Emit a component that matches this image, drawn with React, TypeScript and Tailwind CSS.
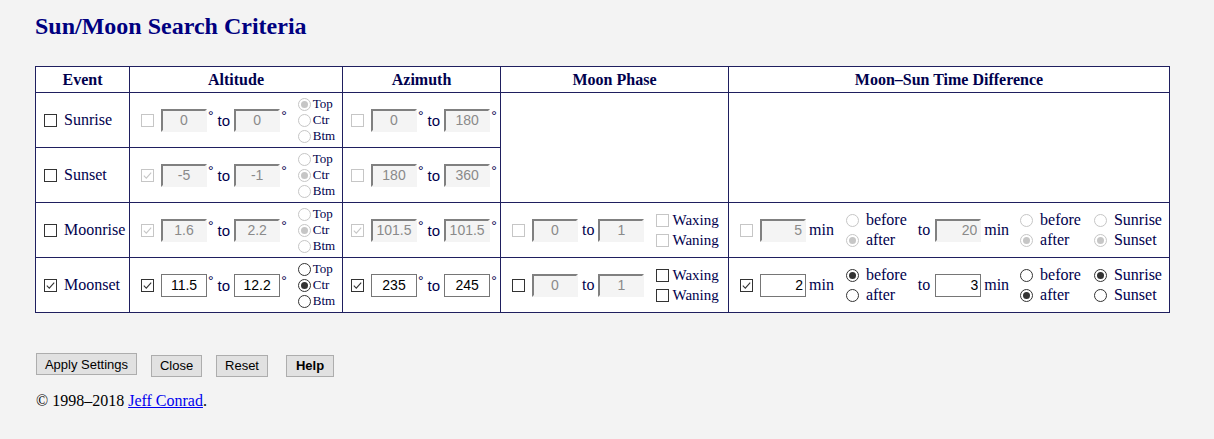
import React from "react";

const NAVY = "text-[#00004d]";

function Cb({ checked = false, disabled = false }: { checked?: boolean; disabled?: boolean }) {
  return (
    <span
      className={`inline-flex h-[13px] w-[13px] shrink-0 items-center justify-center border bg-white ${
        disabled ? "border-[#c6c6c6]" : "border-[#333333]"
      }`}
    >
      {checked && (
        <svg width="11" height="11" viewBox="0 0 11 11">
          <path
            d="M1.8 5.6 L4.3 8.1 L9.2 2.6"
            fill="none"
            stroke={disabled ? "#c6c6c6" : "#333333"}
            strokeWidth="1.1"
          />
        </svg>
      )}
    </span>
  );
}

function Rd({ checked = false, disabled = false }: { checked?: boolean; disabled?: boolean }) {
  return (
    <span
      className={`inline-flex h-[13px] w-[13px] shrink-0 items-center justify-center rounded-full border bg-white ${
        disabled ? "border-[#c6c6c6]" : "border-[#333333]"
      }`}
    >
      {checked && (
        <span className={`h-[7px] w-[7px] rounded-full ${disabled ? "bg-[#c6c6c6]" : "bg-[#333333]"}`} />
      )}
    </span>
  );
}

function Inp({
  value,
  disabled = false,
  right = false,
  className = "",
}: {
  value: string;
  disabled?: boolean;
  right?: boolean;
  className?: string;
}) {
  return (
    <input
      type="text"
      readOnly
      value={value}
      className={`h-[23px] w-[46px] shrink-0 font-['Liberation_Sans',Arial,sans-serif] text-[14px] outline-none ${
        right ? "pr-[2px] text-right" : "text-center"
      } ${
        disabled
          ? "border-2 border-t-[#808080] border-l-[#808080] border-r-[#f4f4f4] border-b-[#f4f4f4] bg-[#f4f4f4] text-[#8a8a8a]"
          : "border border-[#767676] bg-white text-black"
      } ${className}`}
    />
  );
}

function Deg({ className = "" }: { className?: string }) {
  return (
    <span
      className={`relative -top-[4px] font-['Liberation_Sans',Arial,sans-serif] text-[14px] leading-none ${className}`}
    >
      °
    </span>
  );
}

function SansTo({ className = "" }: { className?: string }) {
  return (
    <span className={`font-['Liberation_Sans',Arial,sans-serif] text-[15px] leading-none ${className}`}>to</span>
  );
}

type AltProps = {
  cb: boolean;
  cbDis: boolean;
  a: string;
  b: string;
  dis: boolean;
  pos: number;
  rDis: boolean;
};

function AltCell({ cb, cbDis, a, b, dis, pos, rDis }: AltProps) {
  const labels = ["Top", "Ctr", "Btm"];
  return (
    <div className="flex items-center border-r border-b border-[#1f1f5f] pl-[11px]">
      <Cb checked={cb} disabled={cbDis} />
      <Inp value={a} disabled={dis} className="ml-[7px]" />
      <Deg className="ml-[1px]" />
      <SansTo className="ml-[4px]" />
      <Inp value={b} disabled={dis} className="ml-[4px]" />
      <Deg className="ml-[1px]" />
      <div className="ml-[11px] flex flex-col text-[13px] leading-[16px]">
        {labels.map((l, i) => (
          <div key={l} className="flex items-center">
            <Rd checked={pos === i} disabled={rDis} />
            <span className="ml-[2px]">{l}</span>
          </div>
        ))}
      </div>
    </div>
  );
}

function AzCell({ cb, cbDis, a, b, dis }: { cb: boolean; cbDis: boolean; a: string; b: string; dis: boolean }) {
  return (
    <div className="flex items-center border-r border-b border-[#1f1f5f] pl-[8px]">
      <Cb checked={cb} disabled={cbDis} />
      <Inp value={a} disabled={dis} className="ml-[7px]" />
      <Deg className="ml-[1px]" />
      <SansTo className="ml-[4px]" />
      <Inp value={b} disabled={dis} className="ml-[4px]" />
      <Deg className="ml-[1px]" />
    </div>
  );
}

function EventCell({ label, checked }: { label: string; checked: boolean }) {
  return (
    <div className="flex items-center border-r border-b border-[#1f1f5f] pl-[8px]">
      <Cb checked={checked} />
      <span className="ml-[7px] text-[16px]">{label}</span>
    </div>
  );
}

function PhaseCell({ cbDis, chkDis }: { cbDis: boolean; chkDis: boolean }) {
  return (
    <div className="flex items-center border-r border-b border-[#1f1f5f] pl-[11px]">
      <Cb disabled={cbDis} />
      <Inp value="0" disabled className="ml-[7px]" />
      <span className="ml-[4px] text-[16px] leading-none">to</span>
      <Inp value="1" disabled className="ml-[4px]" />
      <div className="ml-[12px] flex flex-col text-[15px] leading-[20px]">
        {["Waxing", "Waning"].map((l) => (
          <div key={l} className="flex items-center">
            <Cb disabled={chkDis} />
            <span className="ml-[3px]">{l}</span>
          </div>
        ))}
      </div>
    </div>
  );
}

function RadioPair({
  labels,
  sel,
  dis,
  className = "",
}: {
  labels: string[];
  sel: number;
  dis: boolean;
  className?: string;
}) {
  return (
    <div className={`flex flex-col text-[16px] leading-[20px] ${className}`}>
      {labels.map((l, i) => (
        <div key={l} className="flex items-center">
          <Rd checked={sel === i} disabled={dis} />
          <span className="ml-[7px]">{l}</span>
        </div>
      ))}
    </div>
  );
}

function TimeCell({
  cb,
  cbDis,
  a,
  b,
  s1,
  s2,
  s3,
  dis,
}: {
  cb: boolean;
  cbDis: boolean;
  a: string;
  b: string;
  s1: number;
  s2: number;
  s3: number;
  dis: boolean;
}) {
  return (
    <div className="flex items-center border-r border-b border-[#1f1f5f] pl-[11px] text-[16px]">
      <Cb checked={cb} disabled={cbDis} />
      <Inp value={a} disabled={dis} right className="ml-[7px]" />
      <span className="ml-[3px] leading-none">min</span>
      <RadioPair labels={["before", "after"]} sel={s1} dis={dis} className="ml-[12px]" />
      <span className="ml-[11px] leading-none">to</span>
      <Inp value={b} disabled={dis} right className="ml-[5px]" />
      <span className="ml-[3px] leading-none">min</span>
      <RadioPair labels={["before", "after"]} sel={s2} dis={dis} className="ml-[11px]" />
      <RadioPair labels={["Sunrise", "Sunset"]} sel={s3} dis={dis} className="ml-[13px]" />
    </div>
  );
}

function Th({ children }: { children: React.ReactNode }) {
  return (
    <div className="flex items-center justify-center border-r border-b border-[#1f1f5f] text-[16px] font-bold">
      {children}
    </div>
  );
}

function Btn({ children, w, bold = false }: { children: React.ReactNode; w: string; bold?: boolean }) {
  return (
    <button
      className={`h-[22px] ${w} border border-[#adadad] bg-[#e1e1e1] font-['Liberation_Sans',Arial,sans-serif] text-[13px] leading-none text-black ${
        bold ? "font-bold" : ""
      }`}
    >
      {children}
    </button>
  );
}

export default function App() {
  return (
    <div className="min-h-screen bg-[#f3f3f3] pl-[35px] pt-[12px] font-['Liberation_Serif','Times_New_Roman',serif]">
      <h1 className="text-[24px] font-bold leading-[28px] text-[#000080]">Sun/Moon Search Criteria</h1>

      <div
        className={`mt-[26px] grid w-[1135px] grid-cols-[94px_213px_158px_228px_441px] grid-rows-[26px_55px_55px_55px_55px] border-t border-l border-[#1f1f5f] bg-white ${NAVY}`}
      >
        <Th>Event</Th>
        <Th>Altitude</Th>
        <Th>Azimuth</Th>
        <Th>Moon Phase</Th>
        <Th>Moon–Sun Time Difference</Th>

        {/* Sunrise */}
        <EventCell label="Sunrise" checked={false} />
        <AltCell cb={false} cbDis a="0" b="0" dis pos={0} rDis />
        <AzCell cb={false} cbDis a="0" b="180" dis />
        <div className="row-span-2 border-r border-b border-[#1f1f5f]" />
        <div className="row-span-2 border-r border-b border-[#1f1f5f]" />

        {/* Sunset */}
        <EventCell label="Sunset" checked={false} />
        <AltCell cb cbDis a="-5" b="-1" dis pos={1} rDis />
        <AzCell cb={false} cbDis a="180" b="360" dis />

        {/* Moonrise */}
        <EventCell label="Moonrise" checked={false} />
        <AltCell cb cbDis a="1.6" b="2.2" dis pos={1} rDis />
        <AzCell cb cbDis a="101.5" b="101.5" dis />
        <PhaseCell cbDis chkDis />
        <TimeCell cb={false} cbDis a="5" b="20" s1={1} s2={1} s3={1} dis />

        {/* Moonset */}
        <EventCell label="Moonset" checked />
        <AltCell cb cbDis={false} a="11.5" b="12.2" dis={false} pos={1} rDis={false} />
        <AzCell cb cbDis={false} a="235" b="245" dis={false} />
        <PhaseCell cbDis={false} chkDis={false} />
        <TimeCell cb cbDis={false} a="2" b="3" s1={0} s2={1} s3={0} dis={false} />
      </div>

      <div className="mt-[40px] ml-[1px] flex">
        <Btn w="w-[101px]">Apply Settings</Btn>
        <div className="ml-[14px]">
          <Btn w="w-[51px]">Close</Btn>
        </div>
        <div className="ml-[14px]">
          <Btn w="w-[52px]">Reset</Btn>
        </div>
        <div className="ml-[18px]">
          <Btn w="w-[48px]" bold>
            Help
          </Btn>
        </div>
      </div>

      <p className="mt-[15px] ml-[1px] text-[16px] leading-[18px] text-black">
        © 1998–2018{" "}
        <a href="#" className="text-[#0000ee] underline">
          Jeff Conrad
        </a>
        .
      </p>
    </div>
  );
}
